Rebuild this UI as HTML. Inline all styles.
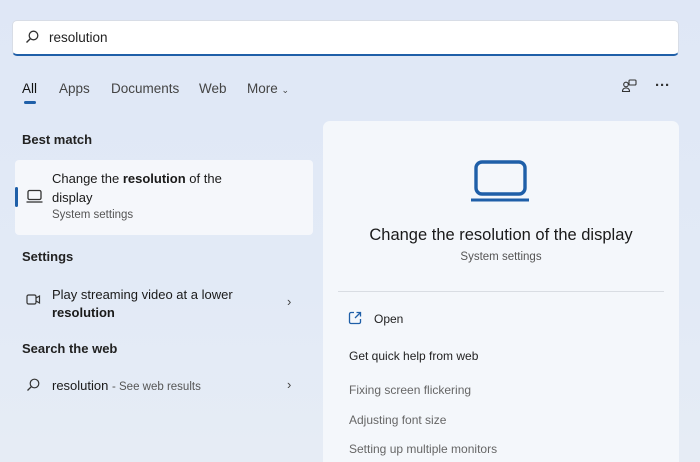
<!DOCTYPE html>
<html><head><meta charset="utf-8"><style>
*{margin:0;padding:0;box-sizing:border-box}
html,body{width:700px;height:462px;overflow:hidden}
body{background:linear-gradient(180deg,#dfe7f6 0%,#e2eaf6 60%,#e6ecf5 100%);font-family:"Liberation Sans",sans-serif;color:#1a1a1a;position:relative}
.a{position:absolute;white-space:nowrap}
.search{left:12px;top:20px;width:667px;height:36px;background:#fff;border-radius:5px;border:1px solid #d8dde6;border-bottom:2px solid #1f5fa8}
.tab{top:81px;font-size:13.5px;color:#444}
.h{font-size:13px;font-weight:bold;color:#222}
.card{left:15px;top:160px;width:298px;height:75px;background:#f5f7fb;border-radius:4px}
.panel{left:323px;top:121px;width:356px;height:360px;background:#f4f7fb;border-radius:7px}
.t13{font-size:13px;color:#1a1a1a}
.sub{font-size:11.5px;color:#555}
.gray{font-size:12px;color:#666}
</style></head><body>
<div class="a search"></div>
<svg class="a" style="left:24px;top:29px" width="16" height="16" viewBox="0 0 16 16"><circle cx="9.5" cy="6.5" r="4.3" fill="none" stroke="#333" stroke-width="1.3"/><line x1="6.4" y1="9.6" x2="2.5" y2="13.5" stroke="#333" stroke-width="1.4"/></svg>
<div class="a" style="left:49px;top:30px;font-size:13.5px;color:#222">resolution</div>

<div class="a tab" style="left:22px;color:#111">All</div>
<div class="a" style="left:24px;top:101px;width:12px;height:3px;background:#1f5fa8;border-radius:2px"></div>
<div class="a tab" style="left:59px">Apps</div>
<div class="a tab" style="left:111px">Documents</div>
<div class="a tab" style="left:199px">Web</div>
<div class="a tab" style="left:247px">More <span style="font-size:9px">&#8964;</span></div>
<svg class="a" style="left:620px;top:78px" width="18" height="16" viewBox="0 0 18 16"><circle cx="6" cy="6.5" r="2.3" fill="none" stroke="#333" stroke-width="1.1"/><path d="M2.5 13.5c0-2.5 1.5-3.5 3.5-3.5s3.5 1 3.5 3.5z" fill="none" stroke="#333" stroke-width="1.1"/><rect x="9" y="2" width="7" height="5" rx="1" fill="none" stroke="#333" stroke-width="1.1"/></svg>
<div class="a" style="left:655px;top:77px;font-size:15px;font-weight:bold;color:#333;letter-spacing:0px">&middot;&middot;&middot;</div>

<div class="a h" style="left:22px;top:132px">Best match</div>
<div class="a card"></div>
<div class="a" style="left:15px;top:187px;width:3px;height:20px;background:#1f5fa8;border-radius:2px"></div>
<svg class="a" style="left:25px;top:188px" width="20" height="16" viewBox="0 0 20 16"><rect x="3" y="2.5" width="13" height="9" rx="1.5" fill="none" stroke="#333" stroke-width="1.3"/><line x1="1.5" y1="14" x2="17.5" y2="14" stroke="#333" stroke-width="1.3"/></svg>
<div class="a t13" style="left:52px;top:171px">Change the <b>resolution</b> of the</div>
<div class="a t13" style="left:52px;top:190px">display</div>
<div class="a sub" style="left:52px;top:209px">System settings</div>

<div class="a h" style="left:22px;top:249px">Settings</div>
<svg class="a" style="left:25px;top:292px" width="18" height="16" viewBox="0 0 18 16"><rect x="2" y="3" width="9" height="9" rx="1.5" fill="none" stroke="#333" stroke-width="1.2"/><path d="M11 6l3.5-2v7L11 9" fill="none" stroke="#333" stroke-width="1.2"/></svg>
<div class="a t13" style="left:52px;top:287px">Play streaming video at a lower</div>
<div class="a t13" style="left:52px;top:305px;font-weight:bold">resolution</div>
<div class="a" style="left:287px;top:294px;font-size:13px;color:#444">&#8250;</div>

<div class="a h" style="left:22px;top:341px">Search the web</div>
<svg class="a" style="left:25px;top:377px" width="16" height="16" viewBox="0 0 16 16"><circle cx="9.5" cy="6.5" r="4.3" fill="none" stroke="#333" stroke-width="1.2"/><line x1="6.4" y1="9.6" x2="2.5" y2="13.5" stroke="#333" stroke-width="1.3"/></svg>
<div class="a t13" style="left:52px;top:378px">resolution <span style="font-size:11.5px;color:#555">- See web results</span></div>
<div class="a" style="left:287px;top:377px;font-size:13px;color:#444">&#8250;</div>

<div class="a panel"></div>
<svg class="a" style="left:469px;top:158px" width="64" height="46" viewBox="0 0 64 46"><rect x="7" y="4" width="49" height="32" rx="6" fill="none" stroke="#1f5fa8" stroke-width="3.4"/><line x1="2" y1="42" x2="60" y2="42" stroke="#1f5fa8" stroke-width="3"/></svg>
<div class="a" style="left:323px;width:356px;text-align:center;top:226px;font-size:16.5px;color:#1a1a1a">Change the resolution of the display</div>
<div class="a sub" style="left:323px;width:356px;text-align:center;top:251px">System settings</div>
<div class="a" style="left:338px;top:291px;width:326px;height:1px;background:#d9dde3"></div>
<svg class="a" style="left:347px;top:310px" width="16" height="16" viewBox="0 0 16 16"><path d="M7 2.5H4a1.5 1.5 0 0 0-1.5 1.5v8A1.5 1.5 0 0 0 4 13.5h8a1.5 1.5 0 0 0 1.5-1.5V9" fill="none" stroke="#1f5fa8" stroke-width="1.3"/><path d="M9.5 2.5h4v4M13.5 2.5L8 8" fill="none" stroke="#1f5fa8" stroke-width="1.3"/></svg>
<div class="a" style="left:374px;top:312px;font-size:12px;color:#222">Open</div>
<div class="a" style="left:349px;top:349px;font-size:12px;color:#222">Get quick help from web</div>
<div class="a gray" style="left:349px;top:383px">Fixing screen flickering</div>
<div class="a gray" style="left:349px;top:413px">Adjusting font size</div>
<div class="a gray" style="left:349px;top:442px">Setting up multiple monitors</div>
</body></html>
